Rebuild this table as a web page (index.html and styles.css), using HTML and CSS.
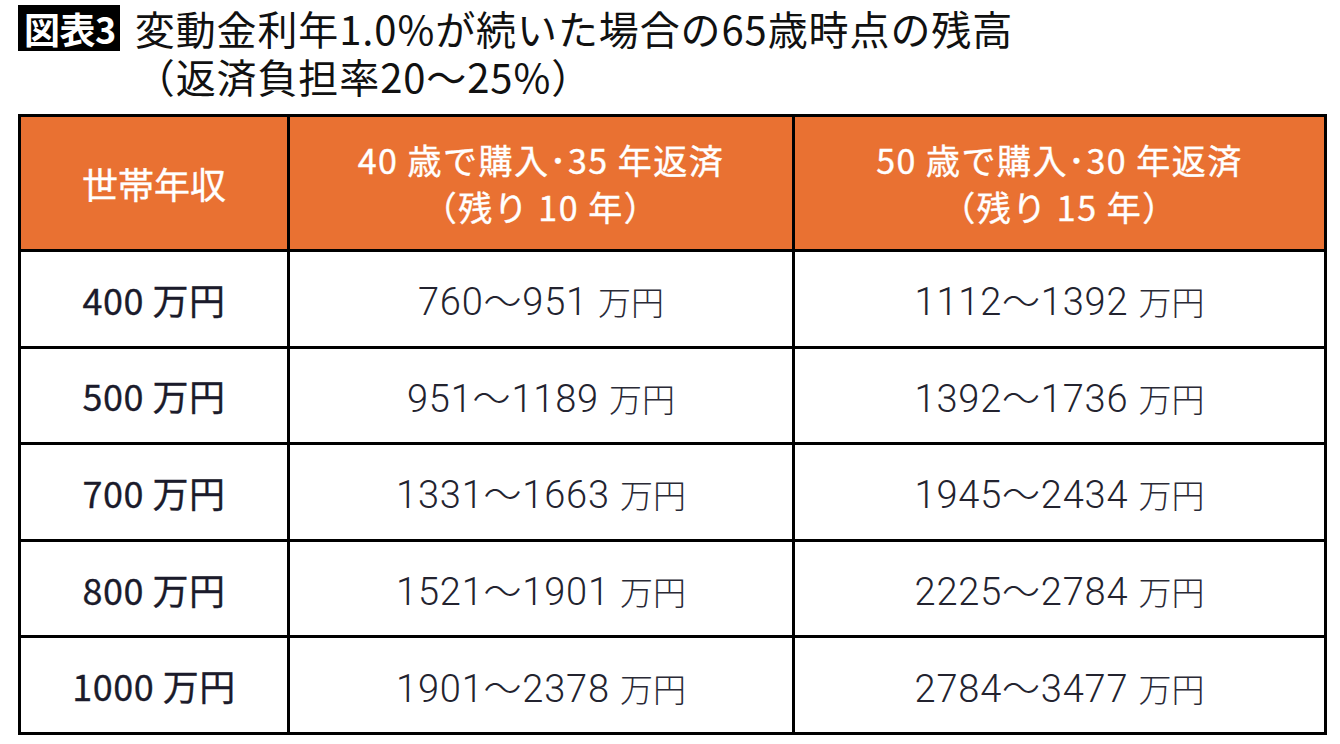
FILE: index.html
```html
<!DOCTYPE html>
<html lang="ja">
<head>
<meta charset="utf-8">
<title>図表3</title>
<link rel="stylesheet" href="styles.css">
</head>
<body>
<header class="title">
  <span class="badge">図表3</span>
  <h1 class="heading">変動金利年1.0%が続いた場合の65歳時点の残高<br>（返済負担率20〜25%）</h1>
</header>
<table class="data">
  <colgroup>
    <col class="c1"><col class="c2"><col class="c3">
  </colgroup>
  <thead>
    <tr>
      <th class="h-first">世帯年収</th>
      <th>40 歳で購入･35 年返済<br>（残り 10 年）</th>
      <th>50 歳で購入･30 年返済<br>（残り 15 年）</th>
    </tr>
  </thead>
  <tbody>
    <tr><td class="income">400 万円</td><td>760〜951 <span class="unit">万円</span></td><td>1112〜1392 <span class="unit">万円</span></td></tr>
    <tr><td class="income">500 万円</td><td>951〜1189 <span class="unit">万円</span></td><td>1392〜1736 <span class="unit">万円</span></td></tr>
    <tr><td class="income">700 万円</td><td>1331〜1663 <span class="unit">万円</span></td><td>1945〜2434 <span class="unit">万円</span></td></tr>
    <tr><td class="income">800 万円</td><td>1521〜1901 <span class="unit">万円</span></td><td>2225〜2784 <span class="unit">万円</span></td></tr>
    <tr><td class="income">1000 万円</td><td>1901〜2378 <span class="unit">万円</span></td><td>2784〜3477 <span class="unit">万円</span></td></tr>
  </tbody>
</table>
</body>
</html>
```
FILE: styles.css
```css
html, body {
  margin: 0;
  padding: 0;
  background: #ffffff;
}
body {
  width: 1340px;
  height: 744px;
  overflow: hidden;
  font-family: "Noto Sans CJK JP", "Noto Sans", sans-serif;
  color: #111;
}
.title {
  display: flex;
  align-items: flex-start;
  padding: 4px 0 0 18px;
  height: 114px;
  box-sizing: border-box;
}
.badge {
  flex: none;
  background: #000;
  color: #fff;
  font-weight: 700;
  font-size: 36px;
  line-height: 46px;
  height: 46px;
  margin-top: 1px;
  padding: 0 4px 0 6px;
  letter-spacing: -0.5px;
  margin-right: 15px;
}
.heading {
  margin: 0;
  font-size: 40px;
  font-weight: 400;
  line-height: 48px;
  letter-spacing: 0.9px;
  color: #111;
}
.data {
  margin-left: 18px;
  border-collapse: collapse;
  table-layout: fixed;
  width: 1306px;
  border: 3px solid #000;
}
.c1 { width: 269px; }
.c2 { width: 505px; }
.c3 { width: 532px; }
.data th, .data td {
  border: 3px solid #000;
  text-align: center;
  vertical-align: middle;
  padding: 0;
}
.data th {
  background: #e97132;
  color: #fff;
  font-weight: 400;
  font-size: 34px;
  line-height: 47px;
  height: 132px;
  letter-spacing: 1.5px;
  -webkit-text-stroke: 0.4px #fff;
}
.data th.h-first {
  font-size: 36px;
  letter-spacing: 0;
}
.data td {
  height: 93.6px;
  font-family: "Roboto", "Noto Sans CJK JP", sans-serif;
  font-size: 38px;
  font-weight: 300;
  color: #23232f;
  letter-spacing: 0.8px;
}
.data td .unit {
  font-family: "Noto Sans CJK JP", sans-serif;
  font-size: 33px;
  font-weight: 300;
  letter-spacing: 0;
  color: #2a2a36;
}
.data td.income {
  font-family: "Noto Sans CJK JP", sans-serif;
  font-weight: 400;
  font-size: 36px;
  letter-spacing: 0.5px;
  color: #1b1b2b;
  -webkit-text-stroke: 0.3px #1b1b2b;
}
```
